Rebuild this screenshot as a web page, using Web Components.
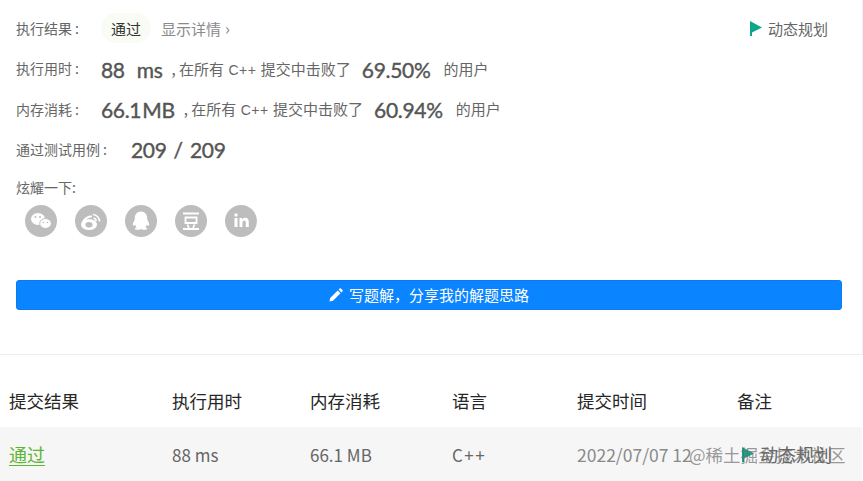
<!DOCTYPE html>
<html lang="zh">
<head>
<meta charset="utf-8">
<title>提交结果</title>
<style>
    html, body { margin: 0; background: #fff; }
    body {
        width: 863px;
        height: 481px;
        overflow: hidden;
        position: relative;
        font-family: "Noto Sans CJK SC", sans-serif;
    }
</style>
</head>
<body>
<submission-card>
    <result-row slot="rows" label="执行结果" gap="22">
        <span style="display:inline-flex;align-items:center;justify-content:center;width:50px;height:30px;border-radius:15px;background:#f9fcf5;color:#333;font-size:15px">通过</span>
        <span style="color:#8a8a8a;font-size:15px;margin-left:10px">显示详情</span>
        <span style="color:#8a8a8a;font-size:16px;margin-left:4px">›</span>
    </result-row>
    <result-row slot="rows" label="执行用时" gap="22">
        <stat-text value="88 ms" space="7" percent="69.50%"></stat-text>
    </result-row>
    <result-row slot="rows" label="内存消耗" gap="22">
        <stat-text value="66.1 MB" space="-4" percent="60.94%"></stat-text>
    </result-row>
    <result-row slot="rows" label="通过测试用例" gap="24">
        <span style="font:21px/24px Lato,sans-serif;-webkit-text-stroke:.4px #555;color:#555;letter-spacing:-.3px;word-spacing:2px;padding-top:1px">209 / 209</span>
    </result-row>
</submission-card>
<submission-table></submission-table>
<script>
// label on the left, whatever the user passes on the right
class ResultRow extends HTMLElement {
    connectedCallback() {
        const gap = this.getAttribute('gap') || 17;
        this.attachShadow({ mode: 'open' }).innerHTML = `
            <style>
                :host { display: flex; align-items: center; height: 24px; }
                .label { font-size: 14px; color: #666; white-space: nowrap; margin-right: ${gap}px; }
                .colon { margin-left: 3px; }
            </style>
            <span class="label">${this.getAttribute('label')}<span class="colon">:</span></span>
            <slot></slot>
        `;
    }
}

class StatText extends HTMLElement {
    connectedCallback() {
        this.attachShadow({ mode: 'open' }).innerHTML = `
            <style>
                :host { display: flex; align-items: center; white-space: nowrap; color: #666; font-size: 15px; }
                .value, .percent {
                    font: 21px/24px Lato, sans-serif;
                    -webkit-text-stroke: .4px #555;
                    color: #555;
                    letter-spacing: -.3px;
                    padding-top: 3px;
                }
                .value { margin-right: 9px; word-spacing: ${this.getAttribute('space')}px; }
                .cpp { font-family: "Liberation Sans", sans-serif; font-size: 14px; letter-spacing: .5px; }
                .percent { margin: 0 13px 0 11px; }
            </style>
            <span class="value">${this.getAttribute('value')}</span>
            <span>, 在所有<span class="cpp"> C++ </span>提交中击败了</span>
            <span class="percent">${this.getAttribute('percent')}</span>
            <span>的用户</span>
        `;
    }
}

class ShareIcons extends HTMLElement {
    connectedCallback() {
        const icons = [
            // wechat
            `<ellipse cx="13" cy="14" rx="7" ry="6" fill="#fff"/><ellipse cx="20.500" cy="18.500" rx="5.800" ry="5" fill="#fff" stroke="#bdbdbd"/><circle cx="10.500" cy="12" r="1" fill="#bdbdbd"/><circle cx="15" cy="12" r="1" fill="#bdbdbd"/><circle cx="18.500" cy="17.500" r=".8" fill="#bdbdbd"/><circle cx="22.500" cy="17.500" r=".8" fill="#bdbdbd"/>`,
            // weibo
            `<ellipse cx="14" cy="19.500" rx="8" ry="5.600" fill="#fff"/><ellipse cx="14" cy="19.800" rx="3.600" ry="2.700" fill="#bdbdbd"/><path d="M18 9.500a7 7 0 0 1 6.500 7M18.500 13a3.200 3.200 0 0 1 2.600 3" fill="none" stroke="#fff" stroke-width="1.600"/><path d="M8 17c2-4 6-6 9-5.500" fill="none" stroke="#fff" stroke-width="2"/>`,
            // qq
            `<path d="M16 6.500c-4 0-6.200 3-6.200 7 0 1-.3 1.800-1 3-1 1.700-1.300 3.700-.6 4.200.6.300 1.300-.5 1.800-1.300.4 1.300 1 2.200 1.700 2.900-1.200.4-1.900 1-1.900 1.500 0 .8 1.500 1 3 1 1.400 0 2.400-.4 3.200-.9.800.5 1.800.9 3.200.9 1.500 0 3-.2 3-1 0-.5-.7-1.100-1.900-1.500.7-.7 1.300-1.600 1.700-2.900.5.800 1.200 1.600 1.800 1.300.7-.5.400-2.500-.6-4.200-.7-1.200-1-2-1-3 0-4-2.200-7-6.200-7z" fill="#fff"/>`,
            // douban
            `<path d="M8 8.500h16M10.500 12.500h11v5.500h-11zM12.500 19.500l1.500 4M19.500 19.500l-1.500 4M8 24h16" fill="none" stroke="#fff" stroke-width="1.800"/>`,
            // linkedin
            `<rect x="9.500" y="13" width="3" height="9" fill="#fff"/><circle cx="11" cy="10" r="1.700" fill="#fff"/><path d="M14.500 13h2.800v1.400c.7-1 1.700-1.600 3-1.600 2.400 0 3.500 1.500 3.500 4.200v5h-3v-4.600c0-1.300-.5-2-1.500-2s-1.800.7-1.800 2V22h-3z" fill="#fff"/>`
        ];
        const items = icons.map(body => `
            <svg width="32" height="32" viewBox="0 0 32 32"><circle cx="16" cy="16" r="16" fill="#bdbdbd"/>${body}</svg>
        `).join('');
        this.attachShadow({ mode: 'open' }).innerHTML = `
            <style>
                :host { display: flex; gap: 18px; }
                svg { display: block; }
            </style>
            ${items}
        `;
    }
}
customElements.define('share-icons', ShareIcons);

class SubmissionCard extends HTMLElement {
    constructor() {
        super();
        this.attachShadow({ mode: 'open' }).innerHTML = `
            <style>
                :host {
                    display: block;
                    box-sizing: border-box;
                    height: 355px;
                    padding: 16px 20px 0 16px;
                    border-right: 1px solid #f0f0f0;
                    border-bottom: 1px solid #eee;
                    position: relative;
                }
                .rows { display: flex; flex-direction: column; gap: 16.400px; }
                .tag {
                    position: absolute;
                    top: 18px;
                    left: 750px;
                    display: flex;
                    align-items: center;
                    gap: 6px;
                    font-size: 15px;
                    color: #666;
                }
                .tag svg { display: block; }
                .share { margin-top: 16px; font-size: 14px; line-height: 20px; color: #666; }
                share-icons { margin: 8px 0 0 9px; }
                .write {
                    display: flex;
                    align-items: center;
                    justify-content: center;
                    gap: 6px;
                    height: 30px;
                    margin: 43px 0 0;
                    padding-bottom: 1px;
                    width: 826px;
                    box-sizing: border-box;
                    background: #0a84ff;
                    border: 1px solid #0a7cf0;
                    border-radius: 3px;
                    color: #fff;
                    font-size: 15px;
                }
            </style>
            <div class="rows"><slot name="rows"></slot></div>
            <div class="tag">
                <svg width="12" height="15" viewBox="0 0 12 15"><path d="M0 0l12 6.500-10 5V15H0z" fill="#0fa58a"/></svg>
                <span>动态规划</span>
            </div>
            <div class="share">炫耀一下:</div>
            <share-icons></share-icons>
            <div class="write">
                <svg width="14" height="14" viewBox="0 0 14 14"><path d="M0.500 13.500l.7-3.500 7.500-7.500 2.800 2.800-7.500 7.500zM9.600 1.600l1-1a1 1 0 0 1 1.400 0l1.400 1.400a1 1 0 0 1 0 1.400l-1 1z" fill="#fff"/></svg>
                <span>写题解&#xFF0C;分享我的解题思路</span>
            </div>
        `;
    }
}

class SubmissionTable extends HTMLElement {
    constructor() {
        super();
        const columns = '163px 138px 142px 125px 160px 1fr';
        this.attachShadow({ mode: 'open' }).innerHTML = `
            <style>
                :host { display: block; margin: 19px 1px 0 0; position: relative; font-size: 17px; }
                .row { display: grid; grid-template-columns: ${columns}; align-items: center; padding-left: 9px; white-space: nowrap; }
                .head { height: 53px; color: #262626; font-size: 17.500px; padding-bottom: 1px; box-sizing: border-box; }
                .body { height: 54px; background: #f6f6f6; color: #666; }
                .pass { color: #5cb531; text-decoration: underline; text-underline-offset: 3px; text-decoration-thickness: 1px; font-size: 18px; }
                .lang { letter-spacing: 1.500px; }
                .time { color: #8a8a8a; font-size: 17.500px; }
                .tag { display: flex; align-items: center; gap: 6px; font-size: 18px; color: #666; margin-left: 5px; }
                .mark {
                    position: absolute;
                    left: 689px;
                    bottom: 16px;
                    font-size: 17.500px;
                    line-height: 20px;
                    color: rgba(110, 110, 110, .7);
                    white-space: nowrap;
                }
            </style>
            <div class="row head">
                <span>提交结果</span><span>执行用时</span><span>内存消耗</span><span>语言</span><span>提交时间</span><span>备注</span>
            </div>
            <div class="row body">
                <span class="pass">通过</span>
                <span>88 ms</span>
                <span>66.1 MB</span>
                <span class="lang">C++</span>
                <span class="time">2022/07/07 12</span>
                <span class="tag">
                    <svg width="12" height="15" viewBox="0 0 12 15"><path d="M0 0l12 6.500-10 5V15H0z" fill="#0fa58a"/></svg>
                    <span>动态规划</span>
                </span>
            </div>
            <div class="mark">@稀土掘金技术社区</div>
        `;
    }
}

customElements.define('result-row', ResultRow);
customElements.define('stat-text', StatText);
customElements.define('submission-card', SubmissionCard);
customElements.define('submission-table', SubmissionTable);
</script>
</body>
</html>
